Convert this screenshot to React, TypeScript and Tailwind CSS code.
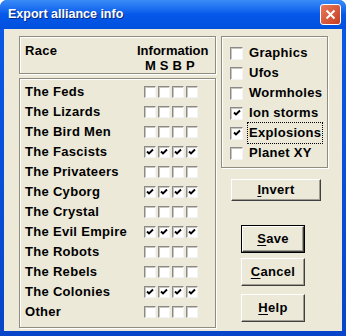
import React from 'react';

const races: { name: string; on: boolean }[] = [
  { name: 'The Feds', on: false },
  { name: 'The Lizards', on: false },
  { name: 'The Bird Men', on: false },
  { name: 'The Fascists', on: true },
  { name: 'The Privateers', on: false },
  { name: 'The Cyborg', on: true },
  { name: 'The Crystal', on: false },
  { name: 'The Evil Empire', on: true },
  { name: 'The Robots', on: false },
  { name: 'The Rebels', on: false },
  { name: 'The Colonies', on: true },
  { name: 'Other', on: false },
];

const options: { name: string; on: boolean; focus?: boolean }[] = [
  { name: 'Graphics', on: false },
  { name: 'Ufos', on: false },
  { name: 'Wormholes', on: false },
  { name: 'Ion storms', on: true },
  { name: 'Explosions', on: true, focus: true },
  { name: 'Planet XY', on: false },
];

function Box({ on, size = 'sm' }: { on: boolean; size?: 'sm' | 'md' }) {
  return (
    <span
      className={`flex items-center justify-center bg-white border-t border-l border-t-[#8a8a8a] border-l-[#8a8a8a] border-b border-r border-b-[#f4f4f4] border-r-[#f4f4f4] shadow-[inset_1px_1px_0_#c8c6bc] ${
        size === 'sm' ? 'h-[12px] w-[12px]' : 'h-[13px] w-[13px]'
      }`}
    >
      {on && (
        <svg width="8" height="8" viewBox="0 0 8 8">
          <path d="M1 3.5 L3 5.5 L7 1.5" stroke="#000" strokeWidth="1.9" fill="none" />
        </svg>
      )}
    </span>
  );
}

function Button({ label, hot, def, className }: { label: string; hot: string; def?: boolean; className: string }) {
  const rest = label.slice(hot.length);
  return (
    <div className={`${className} ${def ? 'border border-black' : ''}`}>
      <div className="flex h-full w-full items-center justify-center border-t border-l border-t-white border-l-white border-b border-r border-b-[#404040] border-r-[#404040] shadow-[inset_-1px_-1px_0_#a09e92]">
        <span className="text-[13px] font-bold tracking-[0.3px]">
          <span className="underline underline-offset-2">{hot}</span>
          {rest}
        </span>
      </div>
    </div>
  );
}

const groupBox = 'border border-[#8f8d80] shadow-[inset_1px_1px_0_#ffffff,1px_1px_0_#ffffff]';

export default function App() {
  return (
    <div
      className="flex h-[336px] w-[346px] flex-col overflow-hidden rounded-t-[7px] bg-gradient-to-b from-[#0a5be8] to-[#0845c8] text-black"
      style={{ fontFamily: '"Liberation Sans", Arial, sans-serif' }}
    >
      {/* title bar */}
      <div className="flex h-[29px] items-center justify-between bg-gradient-to-b from-[#3a8cf8] via-[#0558ea] to-[#0050dc] pl-[8px] pr-[5px]">
        <span className="text-[12.5px] font-bold text-white [text-shadow:1px_1px_0_#0a2a80]">Export alliance info</span>
        <div className="flex h-[21px] w-[21px] items-center justify-center rounded-[3px] border border-white bg-gradient-to-br from-[#e8795c] to-[#c83a1c]">
          <svg width="11" height="11" viewBox="0 0 11 11">
            <path d="M1.5 1.5 L9.5 9.5 M9.5 1.5 L1.5 9.5" stroke="#fff" strokeWidth="2" />
          </svg>
        </div>
      </div>

      {/* body */}
      <div className="mx-[4px] mb-[5px] flex flex-1 bg-[#ECE9D8] pl-[15px] pt-[7px]">
        {/* left column */}
        <div className="flex w-[197px] flex-col">
          <div className={`${groupBox} relative h-[38px]`}>
            <span className="absolute left-[5px] top-[4px] text-[13px] font-bold tracking-[0.3px]">Race</span>
            <span className="absolute left-[117px] top-[4px] text-[13px] font-bold">Information</span>
            <span className="absolute left-[125px] top-[19px] text-[13px] font-bold tracking-[0.2px]">M S B P</span>
          </div>
          <div className={`${groupBox} mt-[4px] h-[250px] pl-[5px] pt-[3px]`}>
            {races.map(r => (
              <div key={r.name} className="flex h-[20px] items-center">
                <span className="w-[119px] text-[13px] font-bold tracking-[0.3px]">{r.name}</span>
                <div className="flex gap-[2px]">
                  <Box on={r.on} />
                  <Box on={r.on} />
                  <Box on={r.on} />
                  <Box on={r.on} />
                </div>
              </div>
            ))}
          </div>
        </div>

        {/* right column */}
        <div className="ml-[5px] flex w-[107px] flex-col">
          <div className={`${groupBox} h-[132px] pl-[8px] pt-[6px]`}>
            {options.map(o => (
              <div key={o.name} className="flex h-[20px] items-center">
                <Box on={o.on} size="md" />
                <span
                  className={`ml-[5px] px-[1px] text-[13px] font-bold tracking-[0.3px] ${
                    o.focus ? 'outline outline-1 outline-dotted outline-black' : ''
                  }`}
                >
                  {o.name}
                </span>
              </div>
            ))}
          </div>
          <Button label="Invert" hot="I" className="ml-[10px] mt-[11px] h-[22px] w-[90px]" />
          <Button label="Save" hot="S" def className="ml-[20px] mt-[24px] h-[28px] w-[64px]" />
          <Button label="Cancel" hot="C" className="ml-[20px] mt-[5px] h-[28px] w-[64px]" />
          <Button label="Help" hot="H" className="ml-[20px] mt-[8px] h-[28px] w-[64px]" />
        </div>
      </div>
    </div>
  );
}
